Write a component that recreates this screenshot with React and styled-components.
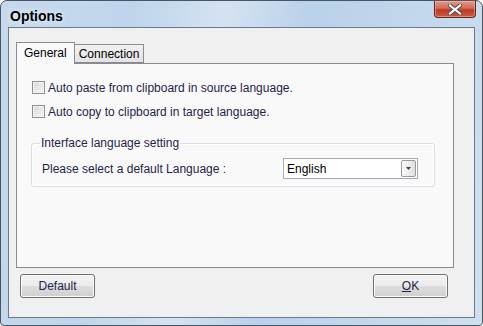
import React from 'react';
import styled, { createGlobalStyle } from 'styled-components';

const Global = createGlobalStyle`
  html, body { margin: 0; padding: 0; background: #ffffff; }
  body { font-family: 'Liberation Sans', Arial, sans-serif; }
`;

//Window frame
const Window = styled.div`
  width: 483px;
  height: 326px;
  box-sizing: border-box;
  display: flex;
  flex-direction: column;
  border: 1px solid #4b5561;
  border-radius: 7px 7px 4px 4px;
  overflow: hidden;
  background: linear-gradient(100deg, #c6daee 0%, #bed5eb 25%, #d4e3f2 42%, #b9d1ea 58%, #c3d8ec 80%, #cfe0f0 100%);
`;

const TitleBar = styled.div`
  height: 26px;
  flex: none;
  display: flex;
  align-items: flex-start;
  justify-content: space-between;
`;

const Title = styled.div`
  font: bold 14px 'Liberation Sans', Arial, sans-serif;
  color: #000;
  margin: 7px 0 0 9px;
  text-shadow: 0 0 6px rgba(255, 255, 255, 0.9);
`;

const CloseButton = styled.div`
  width: 42px;
  height: 17px;
  margin-right: 6px;
  box-sizing: border-box;
  border: 1px solid #5e2a25;
  border-top: none;
  border-radius: 0 0 4px 4px;
  background: linear-gradient(#e39a8a 0%, #d46a56 45%, #bd3a24 55%, #cc5a40 100%);
  display: flex;
  align-items: center;
  justify-content: center;
  box-shadow: inset 0 0 0 1px rgba(255, 200, 190, 0.45);
`;

const Client = styled.div`
  flex: 1;
  margin: 0 7px 7px 7px;
  border: 1px solid #6a7a8c;
  background: #f0f0f0;
  display: flex;
  flex-direction: column;
  padding: 14px 0 0 7px;
`;

//Tabs
const TabStrip = styled.div`
  display: flex;
  align-items: flex-end;
  height: 21px;
  position: relative;
  z-index: 1;
`;

const Tab = styled.div`
  box-sizing: border-box;
  height: ${p => (p.active ? '22px' : '19px')};
  padding: 0 ${p => (p.active ? '7px' : '4px')};
  border: 1px solid #898c95;
  border-bottom: ${p => (p.active ? 'none' : '1px solid #898c95')};
  margin-left: ${p => (p.active ? '0' : '-1px')};
  background: ${p => (p.active ? '#f9f9f9' : 'linear-gradient(#f2f2f2, #e3e3e3)')};
  font-size: 12px;
  color: #000;
  display: flex;
  align-items: center;
  margin-bottom: ${p => (p.active ? '-1px' : '0')};
  padding-bottom: ${p => (p.active ? '1px' : '0')};
`;

const Panel = styled.div`
  width: 438px;
  height: 205px;
  box-sizing: border-box;
  border: 1px solid #898c95;
  background: #f9f9f9;
  padding: 17px 0 0 15px;
`;

const CheckRow = styled.label`
  display: flex;
  align-items: center;
  gap: 3px;
  height: 13px;
  margin-bottom: ${p => p.gap}px;
  font-size: 12px;
  color: #1e2448;
`;

const CheckBox = styled.span`
  width: 13px;
  height: 13px;
  box-sizing: border-box;
  border: 1px solid #8f8f8f;
  background: linear-gradient(135deg, #d9d9d9, #f6f6f6);
  box-shadow: inset 0 0 0 1px #f4f4f4;
  flex: none;
`;

const GroupBox = styled.fieldset`
  width: 404px;
  height: 51px;
  box-sizing: border-box;
  margin: 18px 0 0 -1px;
  padding: 8px 0 0 10px;
  border: 1px solid #d5dfe5;
  border-radius: 3px;
  box-shadow: inset 0 0 0 1px #ffffff;
`;

const Legend = styled.legend`
  font-size: 12px;
  color: #1e2448;
  padding: 0 1px;
  margin-left: -2px;
`;

const SettingRow = styled.div`
  display: flex;
  align-items: center;
  justify-content: space-between;
  padding-right: 16px;
  font-size: 12px;
  color: #1e2448;
`;

const Select = styled.div`
  width: 135px;
  height: 21px;
  box-sizing: border-box;
  border: 1px solid #a5acb5;
  background: #fff;
  display: flex;
  align-items: center;
  justify-content: space-between;
  padding: 0 1px 0 3px;
  font-size: 12px;
  color: #000;
`;

const DropButton = styled.span`
  width: 15px;
  height: 17px;
  box-sizing: border-box;
  border: 1px solid #9a9a9a;
  border-radius: 2px;
  background: linear-gradient(90deg, #fbfbfb, #dedede);
  display: flex;
  align-items: center;
  justify-content: center;
`;

//Buttons
const Footer = styled.div`
  display: flex;
  justify-content: space-between;
  padding: 6px 26px 0 4px;
`;

const Button = styled.div`
  width: 75px;
  height: 24px;
  box-sizing: border-box;
  border: 1px solid #707070;
  border-radius: 3px;
  background: linear-gradient(#f3f3f3 0%, #ebebeb 48%, #dddddd 52%, #cfcfcf 100%);
  box-shadow: inset 0 0 0 1px #fcfcfc;
  display: flex;
  align-items: center;
  justify-content: center;
  font-size: 12px;
  color: #1e2448;
`;

const Mnemonic = styled.span`
  text-decoration: underline;
`;

const App = () => {
  return (
    <>
      <Global />
      <Window>
        <TitleBar>
          <Title>Options</Title>
          <CloseButton>
            <svg width="14" height="11" viewBox="0 0 14 11">
              <path d="M2 1.5 L12 9.5 M12 1.5 L2 9.5" stroke="#4a4a4a" strokeWidth="4" strokeLinecap="square" />
              <path d="M2 1.5 L12 9.5 M12 1.5 L2 9.5" stroke="#ffffff" strokeWidth="2.2" strokeLinecap="square" />
            </svg>
          </CloseButton>
        </TitleBar>
        <Client>
          <TabStrip>
            <Tab active>General</Tab>
            <Tab>Connection</Tab>
          </TabStrip>
          <Panel>
            <CheckRow gap={11}>
              <CheckBox />
              Auto paste from clipboard in source language.
            </CheckRow>
            <CheckRow gap={0}>
              <CheckBox />
              Auto copy to clipboard in target language.
            </CheckRow>
            <GroupBox>
              <Legend>Interface language setting</Legend>
              <SettingRow>
                Please select a default Language :
                <Select>
                  English
                  <DropButton>
                    <svg width="5" height="3" viewBox="0 0 5 3">
                      <path d="M0 0 H5 L2.5 3 Z" fill="#444" />
                    </svg>
                  </DropButton>
                </Select>
              </SettingRow>
            </GroupBox>
          </Panel>
          <Footer>
            <Button>Default</Button>
            <Button><span><Mnemonic>O</Mnemonic>K</span></Button>
          </Footer>
        </Client>
      </Window>
    </>
  );
};

export default App;
